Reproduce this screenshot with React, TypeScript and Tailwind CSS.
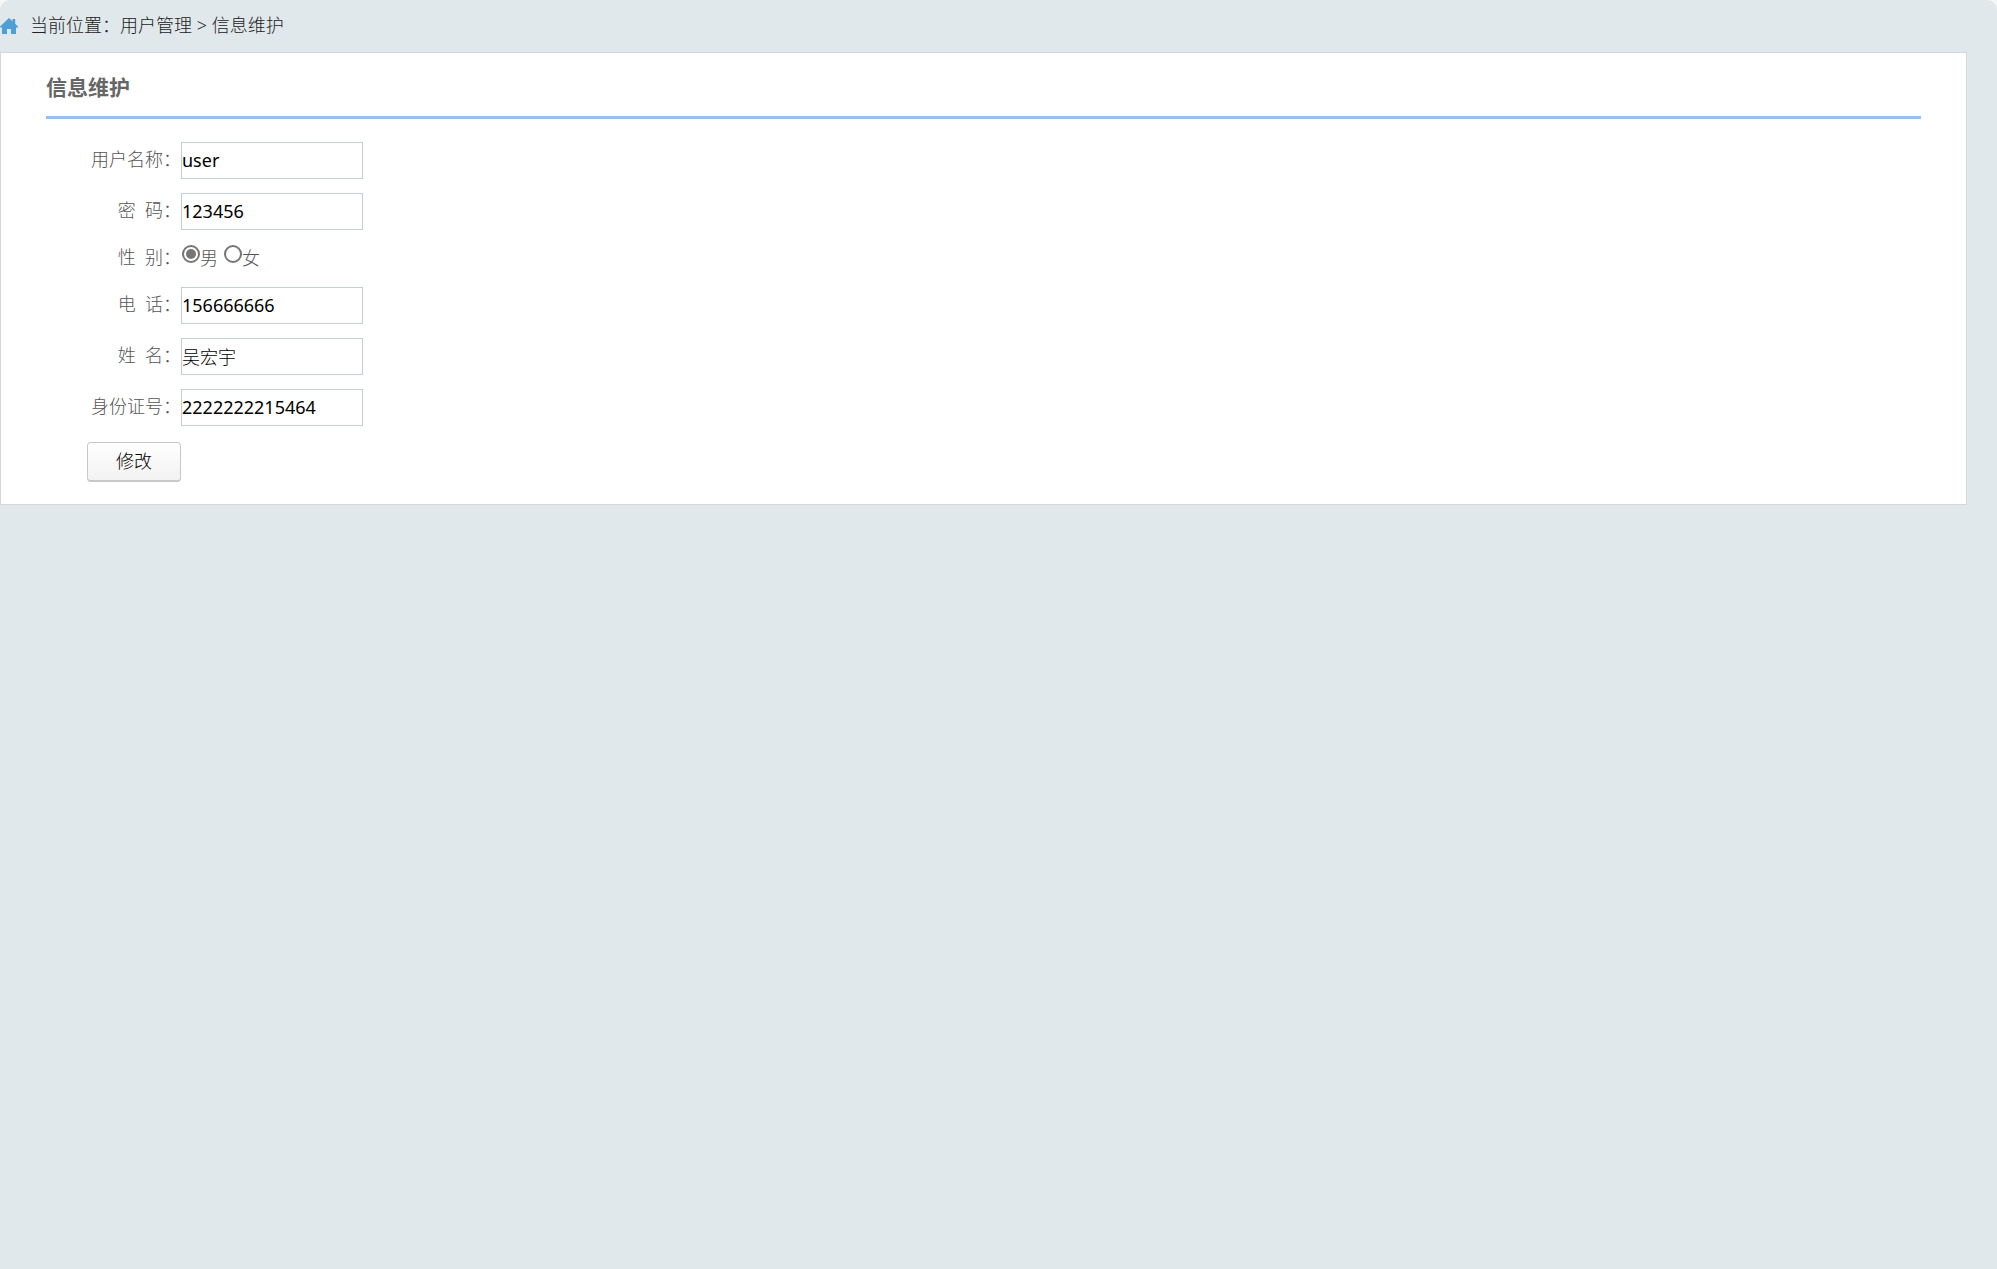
import React from "react";

const textFields = {
  user: { id: "username", label: "用户名称：", value: "user" },
  password: { id: "password", label: "密\u00a0\u00a0码：", value: "123456" },
  phone: { id: "phone", label: "电\u00a0\u00a0话：", value: "156666666" },
  name: { id: "realname", label: "姓\u00a0\u00a0名：", value: "吴宏宇", weight: "font-light" },
  idCard: { id: "idcard", label: "身份证号：", value: "2222222215464" },
};

type TextRowProps = { id: string; label: string; value: string; weight?: string };

function TextRow({ id, label, value, weight = "font-normal" }: TextRowProps) {
  return (
    <div className="flex">
      <label htmlFor={id} className="h-[37px] w-[135px] text-right leading-[34px]">
        {label}
      </label>
      <input
        id={id}
        name={id}
        type="text"
        defaultValue={value}
        className={`h-[37px] w-[182px] border border-[#c3ced1] bg-white pb-0.5 text-black outline-none ${weight}`}
      />
    </div>
  );
}

function Radio({ label, value, checked }: { label: string; value: string; checked?: boolean }) {
  return (
    <label className="flex items-start">
      <input
        type="radio"
        name="gender"
        value={value}
        defaultChecked={checked}
        className="mt-px size-[18px] appearance-none rounded-full border-2 border-[#767676] bg-white bg-clip-content p-[2px] checked:bg-[#767676]"
      />
      <span className="leading-[28px]">{label}</span>
    </label>
  );
}

function HomeIcon() {
  return (
    <svg viewBox="0 0 18 16" className="h-4 w-[18px]" fill="#4d9fd6" aria-hidden="true">
      <path d="M9 0 12.5 3.2V1h2.7v4.7L18 8.5v1h-2V16h-5v-5H7v5H2V9.5H0v-1Z" />
    </svg>
  );
}

export default function App() {
  return (
    <div className="min-h-screen bg-[#f5f7f7] font-['Noto_Sans','Noto_Sans_CJK_SC',sans-serif] text-[18px] font-light text-[#555]">
      <div className="min-h-screen rounded-t-[10px] bg-[#e0e8eb]">
        <nav aria-label="当前位置" className="flex h-[52px] items-center gap-3 text-[#222]">
          <HomeIcon />
          <div className="pb-0.5">
            当前位置：<a href="#users">用户管理</a> &gt; <a href="#info">信息维护</a>
          </div>
        </nav>
        <main className="mr-[30px] border border-[#d3d8d9] bg-white px-[45px] pb-[22px]">
          <h1 className="border-b-3 border-[#97bff5] pt-1.5 text-[21px] leading-[57px] font-bold text-[#666]">信息维护</h1>
          <form className="flex flex-col gap-[14px] pt-[23px]" onSubmit={(e) => e.preventDefault()}>
            <TextRow {...textFields.user} />
            <TextRow {...textFields.password} />
            <div role="radiogroup" aria-labelledby="gender-label" className="flex h-[29px]">
              <span id="gender-label" className="w-[135px] text-right leading-[26px]">
                性&nbsp;&nbsp;别：
              </span>
              <div className="flex gap-1.5 pl-px">
                <Radio label="男" value="male" checked />
                <Radio label="女" value="female" />
              </div>
            </div>
            <TextRow {...textFields.phone} />
            <TextRow {...textFields.name} />
            <TextRow {...textFields.idCard} />
            <button
              type="submit"
              className="mt-0.5 ml-[41px] h-10 w-[94px] rounded-[4px] border border-b-2 border-[#c8c8c8] bg-linear-to-b from-white to-[#f2f2f2] text-black"
            >
              修改
            </button>
          </form>
        </main>
      </div>
    </div>
  );
}
